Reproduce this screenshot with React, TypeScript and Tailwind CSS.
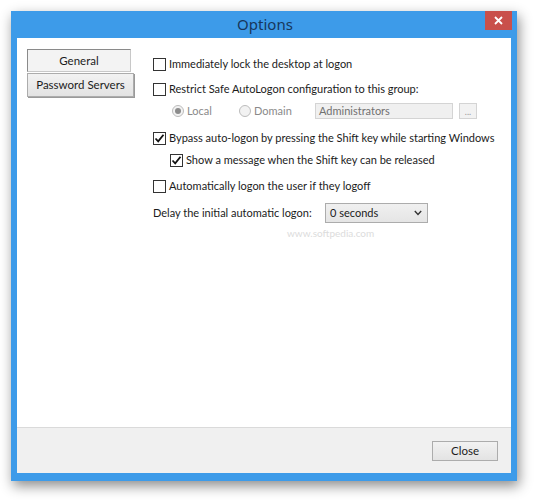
import React from "react";

const font = { fontFamily: 'Lato, "Noto Sans", sans-serif' };

function CheckBox({ checked }: { checked?: boolean }) {
  return (
    <span className="w-[13px] h-[13px] border border-[#333333] bg-white flex items-center justify-center shrink-0">
      {checked && (
        <svg width="11" height="11" viewBox="0 0 11 11">
          <path d="M1.5 5.5 L4.2 8.3 L9.5 1.8" stroke="#111" strokeWidth="1.8" fill="none" />
        </svg>
      )}
    </span>
  );
}

function Radio({ checked }: { checked?: boolean }) {
  return (
    <span className="w-[12px] h-[12px] rounded-full border border-[#bcbcbc] bg-[#f2f2f2] flex items-center justify-center shrink-0">
      {checked && <span className="w-[6px] h-[6px] rounded-full bg-[#8c8c8c]" />}
    </span>
  );
}

function CheckRow({ label, checked, className = "" }: { label: string; checked?: boolean; className?: string }) {
  return (
    <div className={`h-[20px] flex items-center gap-[3px] whitespace-nowrap ${className}`}>
      <CheckBox checked={checked} />
      <span>{label}</span>
    </div>
  );
}

export default function App() {
  return (
    <div className="w-[536px] h-[500px] bg-white pt-[11px] pl-[11px] text-[11px] text-[#1b1b1b]" style={font}>
      <div className="w-[506px] h-[470px] bg-[#3d9be9] flex flex-col shadow-[2px_5px_12px_rgba(0,0,0,0.45)]">
        {/* title bar */}
        <div className="h-[27px] relative flex items-center justify-center shrink-0">
          <span className="text-[15px] text-[#17375c] pl-[2px]" style={{ fontFamily: '"Noto Sans", sans-serif' }}>Options</span>
          <div className="absolute right-[5px] top-0 w-[27px] h-[19px] bg-[#c9504b] flex items-center justify-center">
            <svg width="9" height="9" viewBox="0 0 9 9">
              <path d="M1 1 L8 8 M8 1 L1 8" stroke="#fff" strokeWidth="1.8" />
            </svg>
          </div>
        </div>

        {/* client */}
        <div className="mx-[6px] mb-[8px] flex-1 bg-white flex flex-col">
          <div className="flex-1 flex relative">
            <div className="pl-[10px] pt-[11px] w-[136px] shrink-0 flex flex-col text-[11.5px]">
              <div className="w-[104px] h-[23px] border border-[#8a8a8a] border-b-[#c8c8c8] border-r-[#c8c8c8] bg-[#f3f3f3] flex items-center justify-center">
                General
              </div>
              <div className="mt-[1px] w-[107px] h-[24px] border border-[#acacac] bg-gradient-to-b from-[#f2f2f2] to-[#e3e3e3] shadow-[1px_1px_0_#9a9a9a] flex items-center justify-center">
                Password Servers
              </div>
            </div>

            <div className="flex flex-col pt-[16px]">
              <CheckRow label="Immediately lock the desktop at logon" />
              <CheckRow label="Restrict Safe AutoLogon configuration to this group:" className="mt-[5px]" />
              <div className="mt-[4px] h-[16px] flex items-center pl-[19px] text-[#8a8a8a] whitespace-nowrap">
                <div className="w-[67px] flex items-center gap-[3px]">
                  <Radio checked />
                  <span>Local</span>
                </div>
                <div className="w-[76px] flex items-center gap-[3px]">
                  <Radio />
                  <span>Domain</span>
                </div>
                <div className="w-[138px] h-[16px] border border-[#d4d4d4] bg-[#f0f0f0] flex items-center pl-[3px] text-[#707070]">
                  Administrators
                </div>
                <div className="ml-[6px] w-[18px] h-[16px] border border-[#d4d4d4] bg-[#f2f2f2] flex items-center justify-center text-[9px] text-[#9a9a9a] leading-none">
                  ...
                </div>
              </div>
              <CheckRow label="Bypass auto-logon by pressing the Shift key while starting Windows" checked className="mt-[9px]" />
              <CheckRow label="Show a message when the Shift key can be released" checked className="mt-[2px] pl-[17px]" />
              <CheckRow label="Automatically logon the user if they logoff" className="mt-[6px]" />
              <div className="mt-[7px] h-[20px] flex items-center whitespace-nowrap">
                <span className="w-[172px]">Delay the initial automatic logon:</span>
                <div className="w-[103px] h-[20px] border border-[#acacac] bg-gradient-to-b from-[#f0f0f0] to-[#e5e5e5] flex items-center justify-between pl-[4px] pr-[5px]">
                  <span>0 seconds</span>
                  <svg width="8" height="6" viewBox="0 0 8 6">
                    <path d="M0.8 1 L4 4.4 L7.2 1" stroke="#333" strokeWidth="1.4" fill="none" />
                  </svg>
                </div>
              </div>
            </div>

            <span className="absolute left-[270px] top-[188px] text-[10px] text-[#dcdcdc] pointer-events-none">
              www.softpedia.com
            </span>
          </div>

          {/* footer */}
          <div className="h-[46px] shrink-0 border-t border-[#dadada] bg-[#f0f0f0] flex items-start justify-end pt-[13px] pr-[13px] text-[11.5px]">
            <div className="w-[66px] h-[20px] border border-[#acacac] bg-gradient-to-b from-[#f2f2f2] to-[#e3e3e3] flex items-center justify-center">
              Close
            </div>
          </div>
        </div>
      </div>
    </div>
  );
}
